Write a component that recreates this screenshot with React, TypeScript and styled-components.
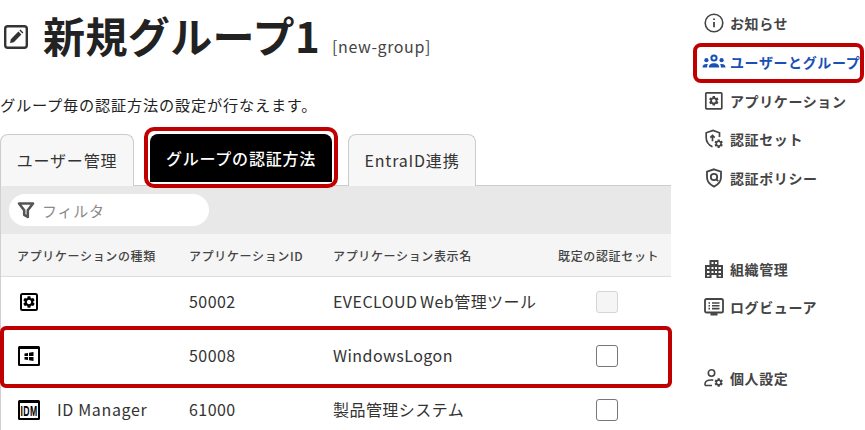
import React from "react";
import styled, { createGlobalStyle } from "styled-components";

const GlobalStyle = createGlobalStyle`
    html, body {
        margin: 0;
        padding: 0;
        background: #fff;
        overflow: hidden;
    }
    body {
        font-family: "Noto Sans CJK JP", "Noto Sans", sans-serif;
        color: #222;
    }
`;

const Page = styled.div`
    display: grid;
    grid-template-columns: 671px 1fr;
    width: 865px;
    height: 430px;
    overflow: hidden;
`;

const Main = styled.main`
    display: flex;
    flex-direction: column;
    min-width: 0;
`;

const TitleRow = styled.div`
    display: flex;
    align-items: flex-end;
    height: 68px;
    padding-left: 4px;
    margin-top: 1px;
`;

const EditIcon = styled.svg`
    align-self: center;
    width: 24px;
    height: 24px;
    margin-right: 15px;
    margin-top: 4px;
`;

const Title = styled.h1`
    margin: 0;
    font-size: 42px;
    font-weight: 700;
    line-height: 68px;
    letter-spacing: 0.4px;
    color: #222;
`;

const Slug = styled.span`
    margin-left: 12px;
    margin-bottom: 11px;
    font-size: 16px;
    line-height: 24px;
    letter-spacing: 0.6px;
    color: #444;
`;

const Lead = styled.p`
    margin: 23px 0 0;
    font-size: 15.2px;
    line-height: 24px;
    letter-spacing: 0.8px;
    color: #222;
`;

const TabBar = styled.div`
    display: flex;
    gap: 16px;
    height: 51px;
    margin-top: 18px;
`;

const Tab = styled.div<{ $active?: boolean; $w: number }>`
    display: flex;
    align-items: center;
    justify-content: center;
    box-sizing: border-box;
    position: relative;
    width: ${(p) => p.$w}px;
    height: ${(p) => (p.$active ? 48 : 52)}px;
    padding-bottom: ${(p) => (p.$active ? 0 : 2)}px;
    border: ${(p) => (p.$active ? "none" : "1px solid #ccc")};
    border-bottom: none;
    border-radius: 8px 8px 0 0;
    background: ${(p) => (p.$active ? "#000" : "#f7f7f7")};
    color: ${(p) => (p.$active ? "#fff" : "#333")};
    font-size: 16px;
    font-weight: ${(p) => (p.$active ? 500 : 400)};
    letter-spacing: 0.8px;
`;

const TabMarker = styled.div`
    position: absolute;
    top: -7px;
    left: -6px;
    right: -6px;
    bottom: -6px;
    border: 4px solid #c00000;
    border-radius: 10px;
    pointer-events: none;
`;

const Panel = styled.div`
    border-left: 1px solid #d0d0d0;
    border-top: 1px solid #ccc;
`;

const FilterBar = styled.div`
    display: flex;
    align-items: center;
    height: 48px;
    padding-left: 8px;
    background: #e8e8e8;
`;

const FilterPill = styled.div`
    display: flex;
    align-items: center;
    gap: 7px;
    box-sizing: border-box;
    width: 200px;
    height: 32px;
    padding-left: 8px;
    border-radius: 16px;
    background: #fff;
    font-size: 15px;
    letter-spacing: 0.8px;
    color: #8a8a8a;
`;

const Row = styled.div<{ $head?: boolean; $marked?: boolean }>`
    display: grid;
    grid-template-columns: 172px 144px 225px 97px;
    align-items: center;
    box-sizing: border-box;
    height: ${(p) => (p.$head ? 43 : 54)}px;
    padding-left: 16px;
    padding-bottom: ${(p) => (p.$head ? 0 : 4)}px;
    background: ${(p) => (p.$head ? "#f5f5f5" : "#fff")};
    border-bottom: ${(p) => (p.$head ? "1px solid #ddd" : "none")};
    font-size: ${(p) => (p.$head ? 12 : 16)}px;
    font-weight: ${(p) => (p.$head ? 500 : 400)};
    letter-spacing: ${(p) => (p.$head ? 0.65 : 0.45)}px;
    word-spacing: ${(p) => (p.$head ? 0 : -1.5)}px;
    color: ${(p) => (p.$head ? "#444" : "#333")};
    white-space: nowrap;
    ${(p) => p.$marked && "position: relative;"}
`;

const Marker = styled.div`
    position: absolute;
    left: -1px;
    right: -1px;
    top: -5px;
    bottom: -3px;
    border: 4px solid #c00000;
    border-radius: 6px;
    pointer-events: none;
`;

const TypeCell = styled.div`
    display: flex;
    align-items: center;
    gap: 16px;
`;

const TextCell = styled.div`
    padding-bottom: 2px;
`;

const TypeLabel = styled.span`
    padding-bottom: 2px;
    letter-spacing: 0.65px;
    word-spacing: 0;
`;

const CenterCell = styled.div`
    display: flex;
    justify-content: center;
`;

const CheckBox = styled.span<{ $disabled?: boolean }>`
    display: block;
    box-sizing: border-box;
    width: 22px;
    height: 22px;
    border: 1px solid ${(p) => (p.$disabled ? "#d4d4d4" : "#777")};
    border-radius: 3px;
    background: ${(p) => (p.$disabled ? "#f5f5f5" : "#fff")};
`;

const Side = styled.nav`
    display: flex;
    flex-direction: column;
    padding: 4px 0 0 22px;
`;

const NavItem = styled.div<{ $current?: boolean; $gapTop?: number }>`
    display: flex;
    align-items: center;
    gap: 6px;
    height: 38.7px;
    margin-top: ${(p) => p.$gapTop ?? 0}px;
    padding-left: 11px;
    font-size: 14px;
    font-weight: 700;
    letter-spacing: 0.6px;
    white-space: nowrap;
    color: ${(p) => (p.$current ? "#1a4fb8" : "#444")};
    ${(p) => p.$current && "position: relative;"}
`;

const NavMarker = styled.div`
    position: absolute;
    left: 0;
    right: 1px;
    top: 0;
    bottom: -2px;
    box-sizing: border-box;
    border: 4px solid #c00000;
    border-radius: 8px;
`;

const NavGlyph = styled.svg<{ $wide?: boolean }>`
    flex: none;
    width: ${(p) => (p.$wide ? 24 : 20)}px;
    height: 20px;
    margin: ${(p) => (p.$wide ? "0 -2px" : "0")};
    fill: none;
    stroke: currentColor;
    stroke-width: 1.6;
`;

const RowGlyph = styled.svg`
    display: block;
    flex: none;
    width: 24px;
    height: 24px;
`;

const gearPath =
    "M19.14 12.94c.04-.3.06-.61.06-.94 0-.32-.02-.64-.07-.94l2.03-1.58c.18-.14.23-.41.12-.61l-1.92-3.32c-.12-.22-.37-.29-.59-.22l-2.39.96c-.5-.38-1.03-.7-1.62-.94l-.36-2.54c-.04-.24-.24-.41-.48-.41h-3.84c-.24 0-.43.17-.47.41l-.36 2.54c-.59.24-1.13.57-1.62.94l-2.39-.96c-.22-.08-.47 0-.59.22L2.74 8.87c-.12.21-.08.47.12.61l2.03 1.58c-.05.3-.09.63-.09.94s.02.64.07.94l-2.03 1.58c-.18.14-.23.41-.12.61l1.92 3.32c.12.22.37.29.59.22l2.39-.96c.5.38 1.03.7 1.62.94l.36 2.54c.05.24.24.41.48.41h3.84c.24 0 .44-.17.47-.41l.36-2.54c.59-.24 1.13-.56 1.62-.94l2.39.96c.22.08.47 0 .59-.22l1.92-3.32c.12-.22.07-.47-.12-.61l-2.01-1.58zM12 15.6c-1.98 0-3.6-1.62-3.6-3.6s1.62-3.6 3.6-3.6 3.6 1.62 3.6 3.6-1.62 3.6-3.6 3.6z";

const InfoGlyph = () => (
    <NavGlyph viewBox="0 0 20 20">
        <circle cx="10" cy="10" r="8.8" />
        <path d="M10 9v5.200M10 5.400v1.600" strokeWidth="1.800" />
    </NavGlyph>
);

const UsersGlyph = () => (
    <NavGlyph viewBox="0 0 24 20" $wide>
        <circle cx="12" cy="6" r="2.600" strokeWidth="2" />
        <g fill="currentColor" stroke="none">
            <circle cx="4.400" cy="8.200" r="2.100" />
            <circle cx="19.600" cy="8.200" r="2.100" />
            <path d="M6.800 15.500c0-3 2.300-4.300 5.200-4.300s5.200 1.300 5.200 4.300z" />
            <path d="M0.500 15.500c0-2.500 1.600-3.600 4-3.600.5 0 1 .1 1.400.2-.6.800-.8 2-.8 3.400zM23.500 15.500c0-2.500-1.600-3.600-4-3.600-.5 0-1 .1-1.400.2.600.8.800 2 .8 3.400z" />
        </g>
    </NavGlyph>
);

const AppGlyph = () => (
    <NavGlyph viewBox="0 0 20 20">
        <rect x="1.800" y="1.800" width="16" height="16" rx="0.800" strokeWidth="1.700" />
        <path d={gearPath} fill="currentColor" stroke="none" fillRule="evenodd" transform="translate(3.800 3.800) scale(.5)" />
    </NavGlyph>
);

const ShieldGearGlyph = () => (
    <NavGlyph viewBox="0 0 20 20">
        <path d="M15.500 8V3.800L9 1.500 2.200 3.800v5c0 4 2.600 7.200 6.300 9" strokeWidth="1.700" />
        <path d="M8.500 12.200V6.500M6.300 8.700l2.200-2.200 2.200 2.200" strokeWidth="1.700" />
        <path d={gearPath} fill="currentColor" stroke="none" fillRule="evenodd" transform="translate(9.400 9.400) scale(.44)" />
    </NavGlyph>
);

const ShieldSearchGlyph = () => (
    <NavGlyph viewBox="0 0 20 20">
        <path d="M10 1.300l7 2.400v5.500c0 4.200-3 7.400-7 9.400-4-2-7-5.200-7-9.400V3.700z" strokeWidth="1.800" />
        <circle cx="10" cy="9" r="3.200" strokeWidth="1.800" />
        <path d="M12.300 11.300l2 1.800" strokeWidth="1.800" />
    </NavGlyph>
);

const BuildingGlyph = () => (
    <NavGlyph viewBox="0 0 20 20">
        <path
            fill="currentColor"
            stroke="none"
            fillRule="evenodd"
            d="M5.500 1h9v5H19v13H1V6h4.500zM7.500 3v2h2V3zm3.500 0v2h2V3zM3 8v2h2.500V8zm4.500 0v2h2V8zm3.500 0v2h2V8zm3.500 0v2H17V8zM3 12v2h2.500v-2zm4.500 0v2h2v-2zm3.500 0v2h2v-2zm3.500 0v2H17v-2zM3 16v1.500h2.500V16zm4.500 0v3h5v-3zm7 0v1.500H17V16z"
        />
    </NavGlyph>
);

const LogGlyph = () => (
    <NavGlyph viewBox="0 0 20 20">
        <rect x="1" y="2" width="18" height="13.500" rx="1.600" strokeWidth="1.800" />
        <path d="M4.500 6h1.500M8 6h7.500M4.500 8.800h1.500M8 8.800h7.500M4.500 11.600h1.500M8 11.600h7.500" />
        <path d="M6.500 17.300h7" strokeWidth="2.400" />
    </NavGlyph>
);

const PersonGearGlyph = () => (
    <NavGlyph viewBox="0 0 20 20">
        <circle cx="7.500" cy="5" r="3.200" />
        <path d="M1 17.500v-1.500c0-2.600 3-4 6.500-4 .6 0 1.100 0 1.700.1M1 17.500h7" />
        <path d={gearPath} fill="currentColor" stroke="none" fillRule="evenodd" transform="translate(9.400 9.200) scale(.44)" />
    </NavGlyph>
);

const navTop = [
    { label: "お知らせ", icon: <InfoGlyph /> },
    { label: "ユーザーとグループ", icon: <UsersGlyph />, current: true },
    { label: "アプリケーション", icon: <AppGlyph /> },
    { label: "認証セット", icon: <ShieldGearGlyph /> },
    { label: "認証ポリシー", icon: <ShieldSearchGlyph /> },
];

const rows = [
    {
        id: "50002",
        name: "EVECLOUD Web管理ツール",
        type: "",
        disabled: true,
        icon: (
            <RowGlyph viewBox="0 0 24 24">
                <rect x="4" y="4" width="16" height="16" rx="1.500" fill="none" stroke="#000" strokeWidth="2" />
                <path d={gearPath} fill="#000" fillRule="evenodd" transform="translate(4.800 4.800) scale(.6)" />
            </RowGlyph>
        ),
    },
    {
        id: "50008",
        name: "WindowsLogon",
        type: "",
        marked: true,
        icon: (
            <RowGlyph viewBox="0 0 24 24">
                <rect x="1" y="2" width="22" height="20" rx="1.500" fill="#000" />
                <rect x="3" y="5" width="18" height="15" fill="#fff" />
                <path d="M7.500 9.500l3.500-.5v3H7.500zM12 8.800l4.500-.7V12H12zM7.500 13H11v3l-3.500-.5zM12 13h4.500v3.900L12 16.200z" fill="#000" />
            </RowGlyph>
        ),
    },
    {
        id: "61000",
        name: "製品管理システム",
        type: "ID Manager",
        icon: (
            <RowGlyph viewBox="0 0 24 24">
                <rect x="1" y="2" width="22" height="20" rx="1.500" fill="#000" />
                <rect x="3" y="5" width="18" height="15" fill="#fff" />
                <text transform="translate(12 17.800) scale(.72 1.200)" textAnchor="middle" fontFamily="Liberation Sans, sans-serif" fontSize="12" fontWeight="700" fill="#000">IDM</text>
            </RowGlyph>
        ),
    },
];

const App = () => {
    return (
        <Page>
            <GlobalStyle />
            <Main>
                <TitleRow>
                    <EditIcon viewBox="0 0 24 24">
                        <rect x="1.200" y="1.200" width="21.600" height="21.600" rx="2.500" fill="none" stroke="#333" strokeWidth="2.400" />
                        <path d="M6 18l.8-3.800 7.600-7.600 3 3-7.600 7.600zM15.400 5.600l1-1 3 3-1 1z" fill="#333" />
                    </EditIcon>
                    <Title>新規グループ1</Title>
                    <Slug>[new-group]</Slug>
                </TitleRow>
                <Lead>グループ毎の認証方法の設定が行なえます。</Lead>
                <TabBar>
                    <Tab $w={134}>ユーザー管理</Tab>
                    <Tab $w={182} $active>
                        グループの認証方法
                        <TabMarker />
                    </Tab>
                    <Tab $w={128}>EntraID連携</Tab>
                </TabBar>
                <Panel>
                    <FilterBar>
                        <FilterPill>
                            <svg width="18" height="18" viewBox="0 0 18 18">
                                <path d="M2 2.500h14L10.800 9.200V16L7.200 13.800V9.200z" fill="none" stroke="#555" strokeWidth="2.600" strokeLinejoin="round" />
                            </svg>
                            フィルタ
                        </FilterPill>
                    </FilterBar>
                    <Row $head>
                        <div>アプリケーションの種類</div>
                        <div>アプリケーションID</div>
                        <div>アプリケーション表示名</div>
                        <div>既定の認証セット</div>
                    </Row>
                    {rows.map((row) => (
                        <Row key={row.id} $marked={row.marked}>
                            <TypeCell>
                                {row.icon}
                                {row.type && <TypeLabel>{row.type}</TypeLabel>}
                            </TypeCell>
                            <TextCell>{row.id}</TextCell>
                            <TextCell>{row.name}</TextCell>
                            <CenterCell>
                                <CheckBox $disabled={row.disabled} />
                            </CenterCell>
                            {row.marked && <Marker />}
                        </Row>
                    ))}
                </Panel>
            </Main>
            <Side>
                {navTop.map((item) => (
                    <NavItem key={item.label} $current={item.current}>
                        {item.icon}
                        {item.label}
                        {item.current && <NavMarker />}
                    </NavItem>
                ))}
                <NavItem $gapTop={52}>
                    <BuildingGlyph />
                    組織管理
                </NavItem>
                <NavItem>
                    <LogGlyph />
                    ログビューア
                </NavItem>
                <NavItem $gapTop={32}>
                    <PersonGearGlyph />
                    個人設定
                </NavItem>
            </Side>
        </Page>
    );
};

export default App;
